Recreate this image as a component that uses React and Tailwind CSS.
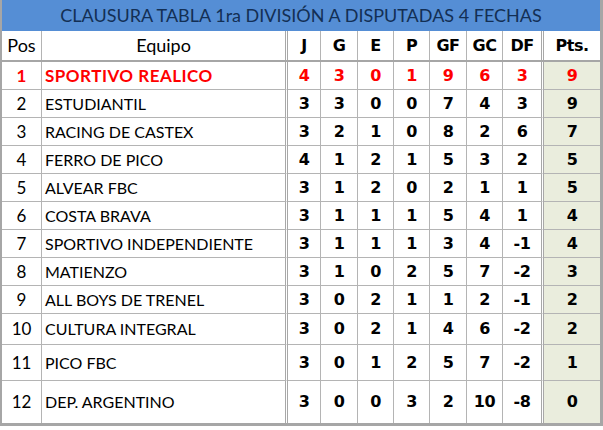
const rows = [
  [1, 'SPORTIVO REALICO', 4, 3, 0, 1, 9, 6, 3, 9],
  [2, 'ESTUDIANTIL', 3, 3, 0, 0, 7, 4, 3, 9],
  [3, 'RACING DE CASTEX', 3, 2, 1, 0, 8, 2, 6, 7],
  [4, 'FERRO DE PICO', 4, 1, 2, 1, 5, 3, 2, 5],
  [5, 'ALVEAR FBC', 3, 1, 2, 0, 2, 1, 1, 5],
  [6, 'COSTA BRAVA', 3, 1, 1, 1, 5, 4, 1, 4],
  [7, 'SPORTIVO INDEPENDIENTE', 3, 1, 1, 1, 3, 4, -1, 4],
  [8, 'MATIENZO', 3, 1, 0, 2, 5, 7, -2, 3],
  [9, 'ALL BOYS DE TRENEL', 3, 0, 2, 1, 1, 2, -1, 2],
  [10, 'CULTURA INTEGRAL', 3, 0, 2, 1, 4, 6, -2, 2],
  [11, 'PICO FBC', 3, 0, 1, 2, 5, 7, -2, 1],
  [12, 'DEP. ARGENTINO', 3, 0, 0, 3, 2, 10, -8, 0],
];

// row heights include the bottom grid line
const heights = ['h-[28px]', 'h-[28px]', 'h-[28px]', 'h-[28px]', 'h-[28px]', 'h-[28px]', 'h-[28px]', 'h-[28px]', 'h-[28px]', 'h-[31px]', 'h-[36px]', 'h-[42px]'];

const numCols = ['w-[33px]', 'w-[37px]', 'w-[36px]', 'w-[36px]', 'w-[37px]', 'w-[36px]'];

const txt = "font-['Lato','Open_Sans',sans-serif]";
const num = "font-['DejaVu_Sans',Verdana,sans-serif] font-bold text-[16px] tracking-[-0.5px]";

const Row = ({ r, idx }) => {
  const first = idx === 0;
  const last = idx === rows.length - 1;
  const color = first ? 'text-[#ff0000]' : 'text-black';
  const line = last ? '' : 'border-b border-[#b4b4b4]';
  return (
    <div className={`flex ${heights[idx]} ${color}`}>
      <div className={`w-[40px] flex items-center justify-center border-r border-[#b4b4b4] text-[17px] ${txt} ${line} ${first ? 'font-bold' : ''}`}>
        {r[0]}
      </div>
      <div className={`w-[246px] flex items-center pl-[3px] border-r-[3px] border-double border-r-[#a8a8a8] ${txt} ${line} ${first ? 'font-bold text-[17px] tracking-[0.5px]' : 'text-[16px]'}`}>
        {r[1]}
      </div>
      {r.slice(2, 8).map((v, i) => (
        <div key={i} className={`${numCols[i]} flex items-center justify-center border-r border-[#b4b4b4] ${num} ${line}`}>
          {v}
        </div>
      ))}
      <div className={`w-[41px] flex items-center justify-center border-r-[3px] border-double border-r-[#a8a8a8] ${num} ${line}`}>
        {r[8]}
      </div>
      <div className={`w-[56px] flex items-center justify-center bg-[#eaeddd] ${num} ${line}`}>
        {r[9]}
      </div>
    </div>
  );
};

export default function App() {
  const heads = ['J', 'G', 'E', 'P', 'GF', 'GC'];
  return (
    <div className="w-[603px] h-[430px] bg-white">
      <div className="w-[603px] border-l-2 border-r-[3px] border-b-[3px] border-[#a6a6a6]">
        <div className={`h-[31px] bg-[#558ed5] flex items-center justify-center text-[#132f54] text-[18px] ${txt}`}>
          CLAUSURA TABLA 1ra DIVISIÓN A DISPUTADAS 4 FECHAS
        </div>
        <div className="flex h-[31px] border-b-2 border-[#a6a6a6]">
          <div className={`w-[40px] flex items-center justify-center border-r border-[#b4b4b4] text-[18px] ${txt}`}>
            Pos
          </div>
          <div className={`w-[246px] flex items-center justify-center border-r-[3px] border-double border-r-[#a8a8a8] text-[18px] ${txt}`}>
            Equipo
          </div>
          {heads.map((h, i) => (
            <div key={h} className={`${numCols[i]} flex items-center justify-center border-r border-[#b4b4b4] ${num}`}>
              {h}
            </div>
          ))}
          <div className={`w-[41px] flex items-center justify-center border-r-[3px] border-double border-r-[#a8a8a8] ${num}`}>
            DF
          </div>
          <div className={`w-[56px] flex items-center justify-center ${num}`}>
            Pts.
          </div>
        </div>
        {rows.map((r, i) => (
          <Row key={r[0]} r={r} idx={i} />
        ))}
      </div>
    </div>
  );
}
